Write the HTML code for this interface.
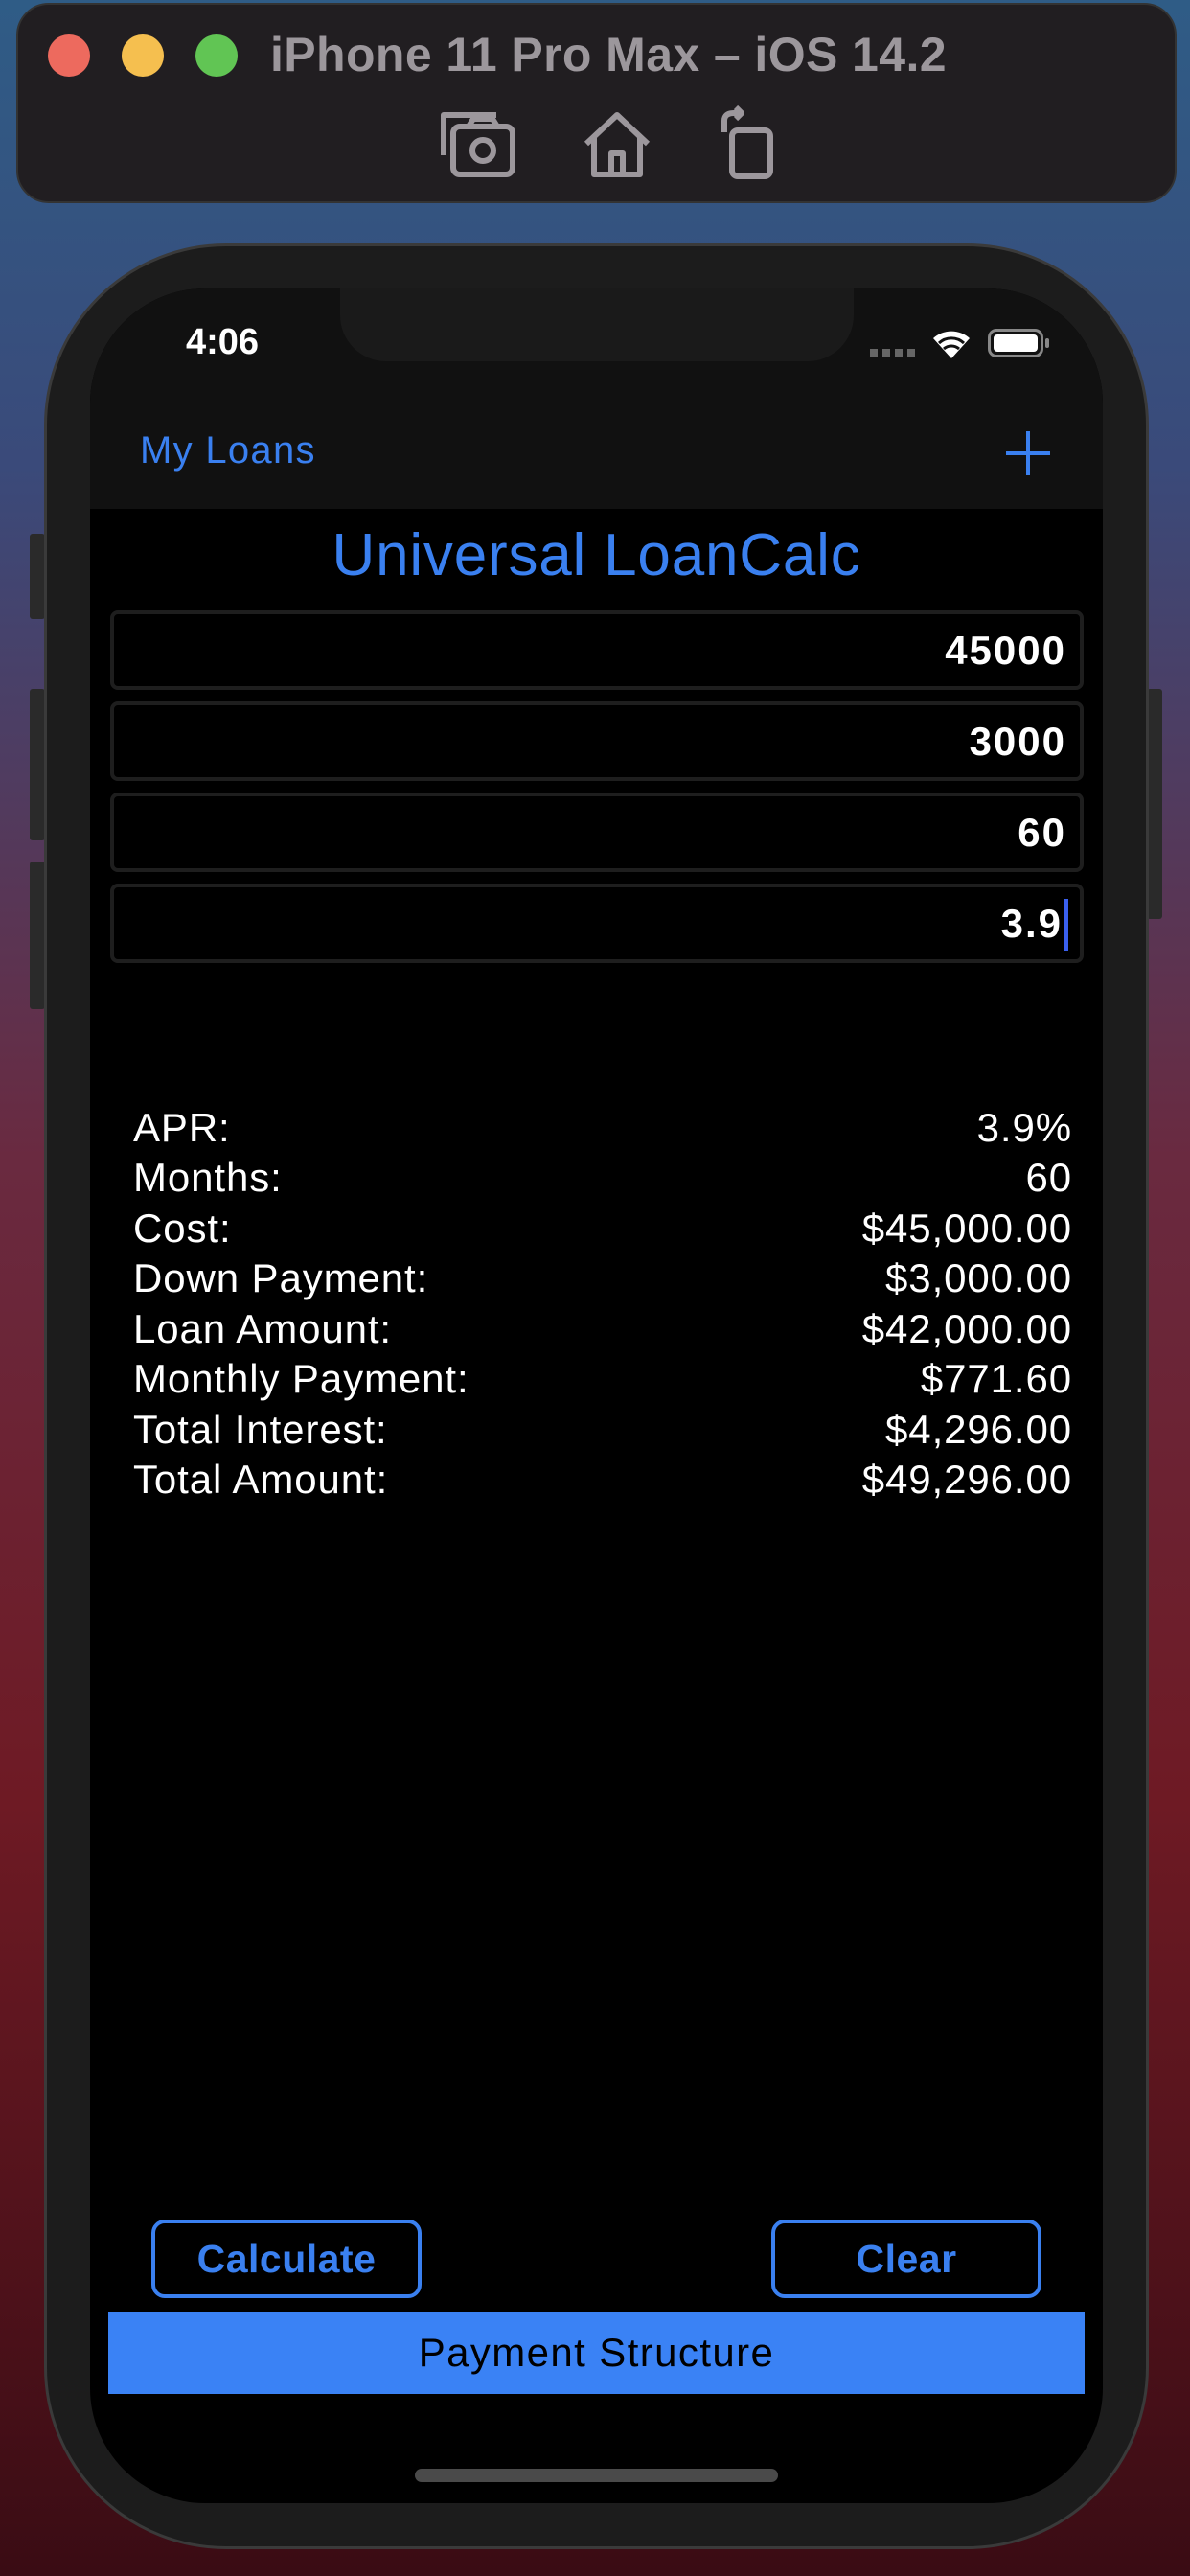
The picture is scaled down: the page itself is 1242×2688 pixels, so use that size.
<!DOCTYPE html>
<html><head><meta charset="utf-8"><style>
*{margin:0;padding:0;box-sizing:border-box}
body{width:1242px;height:2688px;overflow:hidden;position:relative;font-family:"Liberation Sans",sans-serif;
background:linear-gradient(180deg,#2f5c86 0%,#3a4a7a 18%,#6a2a40 45%,#6e1a24 70%,#3a0c14 100%);}
.abs{position:absolute}
.bar{left:17px;top:3px;width:1211px;height:209px;background:#211e21;border-radius:34px;border:2px solid #333}
.dot{width:44px;height:44px;border-radius:50%;top:36px}
.title{left:282px;top:28px;font-size:50px;font-weight:bold;color:#9c979c;letter-spacing:0.4px}
.phone{left:46px;top:254px;width:1153px;height:2406px;background:#1c1c1c;border-radius:190px;border:3px solid #3a3a3a}
.screen{left:94px;top:301px;width:1057px;height:2311px;background:#000;border-radius:120px;overflow:hidden}
.btn{background:#2a2a2a;border-radius:3px}
.field{left:115px;width:1016px;height:83px;border:4px solid #1e1e1e;border-radius:8px;background:#000;color:#fff;font-weight:bold;font-size:42px;letter-spacing:2px;text-align:right;padding-right:14px;line-height:75px}
.row{left:139px;width:980px;height:52px;font-size:42px;color:#fff;letter-spacing:0.9px;line-height:52px}
.row span{position:absolute;right:0}
.ob{top:2316px;width:282px;height:82px;border:4px solid #3a80f0;border-radius:14px;color:#3a80f0;font-weight:bold;font-size:41px;letter-spacing:0.5px;text-align:center;line-height:74px}
</style></head><body>
<div class="abs bar"></div>
<div class="abs dot" style="left:50px;background:#ed6a5e"></div>
<div class="abs dot" style="left:127px;background:#f5bf4f"></div>
<div class="abs dot" style="left:204px;background:#61c554"></div>
<div class="abs title">iPhone 11 Pro Max – iOS 14.2</div>
<svg class="abs" style="left:455px;top:112px" width="90" height="75" viewBox="0 0 90 75" fill="none" stroke="#9c979c" stroke-width="6" stroke-linejoin="round">
<path d="M8 50V8h55"/><rect x="18" y="20" width="62" height="50" rx="7"/><circle cx="49" cy="45" r="11"/><path d="M34 20l5-8h20l5 8"/></svg>
<svg class="abs" style="left:606px;top:112px" width="76" height="76" viewBox="0 0 76 76" fill="none" stroke="#9c979c" stroke-width="6" stroke-linejoin="round">
<path d="M6 38L38 8l32 30M14 30v40h48V30M32 70V48h12v22"/></svg>
<svg class="abs" style="left:750px;top:108px" width="62" height="80" viewBox="0 0 62 80" fill="none" stroke="#9c979c" stroke-width="6" stroke-linejoin="round">
<rect x="14" y="28" width="40" height="48" rx="6"/><path d="M6 30V18q0-8 10-8h6M18 4l6 6-6 6"/></svg>

<div class="abs btn" style="left:31px;top:557px;width:16px;height:89px"></div>
<div class="abs btn" style="left:31px;top:719px;width:16px;height:158px"></div>
<div class="abs btn" style="left:31px;top:899px;width:16px;height:154px"></div>
<div class="abs btn" style="left:1197px;top:719px;width:16px;height:240px"></div>
<div class="abs phone"></div>
<div class="abs screen">
  <div class="abs" style="left:0;top:0;width:1057px;height:230px;background:#111"></div>
  <div class="abs" style="left:261px;top:0;width:536px;height:76px;background:#1a1a1a;border-radius:0 0 48px 48px"></div>
</div>
<div class="abs" style="left:194px;top:336px;font-size:38px;font-weight:bold;color:#fff">4:06</div>
<div class="abs" style="left:908px;top:364px;width:50px;height:8px;background:repeating-linear-gradient(90deg,#666 0 8px,transparent 8px 13px)"></div>
<svg class="abs" style="left:972px;top:340px" width="42" height="36" viewBox="0 0 42 36"><path d="M21 34L2 13a28 28 0 0 1 38 0z" fill="#fff"/><path d="M8 18a19 19 0 0 1 26 0M13 24a12 12 0 0 1 16 0" stroke="#111" stroke-width="3" fill="none"/></svg>
<div class="abs" style="left:1031px;top:343px;width:58px;height:30px;border:3px solid #888;border-radius:9px;padding:3px"><div style="width:100%;height:100%;background:#fff;border-radius:4px"></div></div>
<div class="abs" style="left:1091px;top:353px;width:4px;height:10px;background:#888;border-radius:2px"></div>
<div class="abs" style="left:146px;top:448px;font-size:40px;color:#3a80f0;letter-spacing:1.3px">My Loans</div>
<div class="abs" style="left:1050px;top:471px;width:46px;height:4px;background:#3a80f0"></div>
<div class="abs" style="left:1071px;top:450px;width:4px;height:46px;background:#3a80f0"></div>
<div class="abs" style="left:94px;top:544px;width:1057px;text-align:center;font-size:62px;color:#3a80f0;letter-spacing:0.8px">Universal LoanCalc</div>
<div class="abs field" style="top:637px">45000</div>
<div class="abs field" style="top:732px">3000</div>
<div class="abs field" style="top:827px">60</div>
<div class="abs field" style="top:922px;padding-right:18px">3.9</div>
<div class="abs" style="left:1111px;top:938px;width:4px;height:54px;background:#3a60f0"></div>
<div class="abs row" style="top:1151px">APR:<span>3.9%</span></div>
<div class="abs row" style="top:1203px">Months:<span>60</span></div>
<div class="abs row" style="top:1256px">Cost:<span>$45,000.00</span></div>
<div class="abs row" style="top:1308px">Down Payment:<span>$3,000.00</span></div>
<div class="abs row" style="top:1361px">Loan Amount:<span>$42,000.00</span></div>
<div class="abs row" style="top:1413px">Monthly Payment:<span>$771.60</span></div>
<div class="abs row" style="top:1466px">Total Interest:<span>$4,296.00</span></div>
<div class="abs row" style="top:1518px">Total Amount:<span>$49,296.00</span></div>
<div class="abs ob" style="left:158px">Calculate</div>
<div class="abs ob" style="left:805px">Clear</div>
<div class="abs" style="left:113px;top:2412px;width:1019px;height:86px;background:#3a82f5;color:#000;font-size:42px;letter-spacing:1.4px;text-align:center;line-height:86px">Payment Structure</div>
<div class="abs" style="left:433px;top:2576px;width:379px;height:14px;background:#4a4a4a;border-radius:7px"></div>
</body></html>
